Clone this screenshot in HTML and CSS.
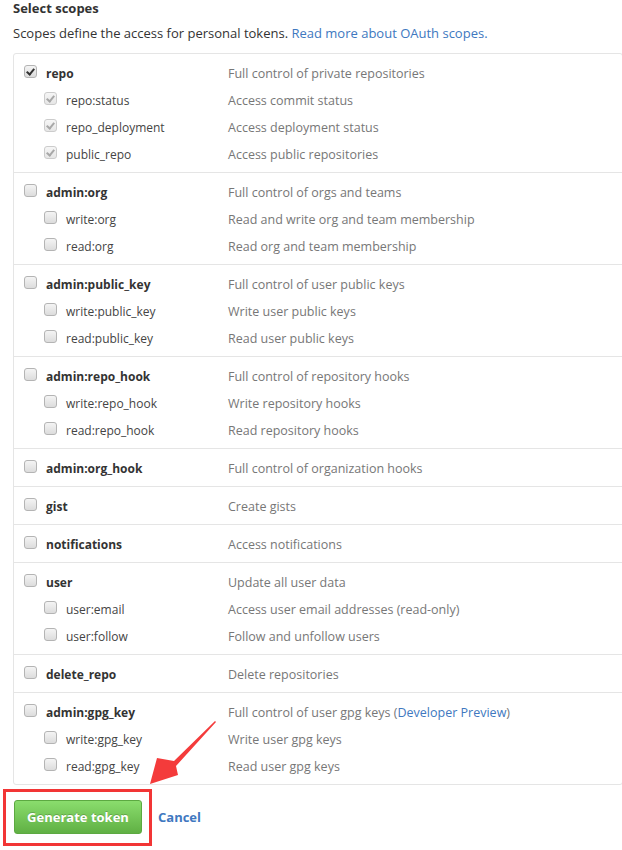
FILE: index.html
```html
<!DOCTYPE html>
<html>
<head>
<meta charset="utf-8">
<link rel="stylesheet" href="styles.css">
</head>
<body>
<div class="page">
  <h3 class="title">Select scopes</h3>
  <p class="note">Scopes define the access for personal tokens. <a href="#">Read more about OAuth scopes.</a></p>
  <div class="box">
    <div class="group">
      <div class="row"><span class="name main"><span class="cb on"></span>repo</span><span class="desc">Full control of private repositories</span></div>
      <div class="row"><span class="name sub"><span class="cb on dis"></span>repo:status</span><span class="desc">Access commit status</span></div>
      <div class="row"><span class="name sub"><span class="cb on dis"></span>repo_deployment</span><span class="desc">Access deployment status</span></div>
      <div class="row"><span class="name sub"><span class="cb on dis"></span>public_repo</span><span class="desc">Access public repositories</span></div>
    </div>
    <div class="group">
      <div class="row"><span class="name main"><span class="cb"></span>admin:org</span><span class="desc">Full control of orgs and teams</span></div>
      <div class="row"><span class="name sub"><span class="cb"></span>write:org</span><span class="desc">Read and write org and team membership</span></div>
      <div class="row"><span class="name sub"><span class="cb"></span>read:org</span><span class="desc">Read org and team membership</span></div>
    </div>
    <div class="group">
      <div class="row"><span class="name main"><span class="cb"></span>admin:public_key</span><span class="desc">Full control of user public keys</span></div>
      <div class="row"><span class="name sub"><span class="cb"></span>write:public_key</span><span class="desc">Write user public keys</span></div>
      <div class="row"><span class="name sub"><span class="cb"></span>read:public_key</span><span class="desc">Read user public keys</span></div>
    </div>
    <div class="group">
      <div class="row"><span class="name main"><span class="cb"></span>admin:repo_hook</span><span class="desc">Full control of repository hooks</span></div>
      <div class="row"><span class="name sub"><span class="cb"></span>write:repo_hook</span><span class="desc">Write repository hooks</span></div>
      <div class="row"><span class="name sub"><span class="cb"></span>read:repo_hook</span><span class="desc">Read repository hooks</span></div>
    </div>
    <div class="group">
      <div class="row"><span class="name main"><span class="cb"></span>admin:org_hook</span><span class="desc">Full control of organization hooks</span></div>
    </div>
    <div class="group">
      <div class="row"><span class="name main"><span class="cb"></span>gist</span><span class="desc">Create gists</span></div>
    </div>
    <div class="group">
      <div class="row"><span class="name main"><span class="cb"></span>notifications</span><span class="desc">Access notifications</span></div>
    </div>
    <div class="group">
      <div class="row"><span class="name main"><span class="cb"></span>user</span><span class="desc">Update all user data</span></div>
      <div class="row"><span class="name sub"><span class="cb"></span>user:email</span><span class="desc">Access user email addresses (read-only)</span></div>
      <div class="row"><span class="name sub"><span class="cb"></span>user:follow</span><span class="desc">Follow and unfollow users</span></div>
    </div>
    <div class="group">
      <div class="row"><span class="name main"><span class="cb"></span>delete_repo</span><span class="desc">Delete repositories</span></div>
    </div>
    <div class="group">
      <div class="row"><span class="name main"><span class="cb"></span>admin:gpg_key</span><span class="desc">Full control of user gpg keys (<a href="#">Developer Preview</a>)</span></div>
      <div class="row"><span class="name sub"><span class="cb"></span>write:gpg_key</span><span class="desc">Write user gpg keys</span></div>
      <div class="row"><span class="name sub"><span class="cb"></span>read:gpg_key</span><span class="desc">Read user gpg keys</span></div>
    </div>
  </div>
  <div class="actions">
    <button class="btn">Generate token</button>
    <a class="cancel" href="#">Cancel</a>
  </div>
  <div class="highlight"></div>
  <svg class="arrow" width="80" height="80" viewBox="0 0 80 80">
    <polygon points="75,11 34,51 17,48 10,74 38,65 36,56 76,12" fill="#f43b3b"/>
  </svg>
</div>
</body>
</html>
```

FILE: styles.css
```css
html, body {
  margin: 0;
  padding: 0;
  background: #fff;
  overflow: hidden;
}
.page {
  position: relative;
  padding-left: 13px;
  font-family: "Open Sans", "Noto Sans", sans-serif;
  font-size: 12.5px;
  color: #333;
  height: 850px;
}
.title {
  margin: 0;
  font-size: 13px;
  font-weight: 700;
  line-height: 16px;
}
.note {
  margin: 7px 0 0 0;
  line-height: 20px;
  font-size: 13px;
  color: #333;
}
a {
  color: #4078c0;
  text-decoration: none;
}
.box {
  margin-top: 10px;
  width: 610px;
  border: 1px solid #e5e5e5;
  border-radius: 3px;
  box-sizing: border-box;
}
.group {
  padding: 5px 0 5px 10px;
  border-top: 1px solid #e5e5e5;
}
.group:first-child {
  border-top: 0;
}
.row {
  display: grid;
  grid-template-columns: 204px 1fr;
  align-items: center;
  height: 27px;
  padding-top: 2px;
  box-sizing: border-box;
}
.name {
  display: flex;
  align-items: center;
  white-space: nowrap;
  font-size: 12px;
}
.name.main {
  font-weight: 700;
}
.name.sub {
  padding-left: 20px;
  color: #444;
}
.desc {
  color: #777;
}
.cb {
  box-sizing: border-box;
  width: 13px;
  height: 13px;
  margin-right: 9px;
  margin-top: -5px;
  border: 1px solid #b4b4b4;
  border-radius: 3px;
  background: linear-gradient(#f4f4f4, #dcdcdc);
  position: relative;
  flex: none;
}
.cb.on::after {
  content: "";
  position: absolute;
  left: 3px;
  top: 1px;
  width: 3px;
  height: 6px;
  border: solid #333;
  border-width: 0 2px 2px 0;
  transform: rotate(40deg);
}
.cb.dis {
  border-color: #ccc;
  background: linear-gradient(#f6f6f6, #e6e6e6);
}
.cb.dis::after {
  border-color: #a8a8a8;
}
.actions {
  display: flex;
  align-items: center;
  gap: 16px;
  margin-top: 15px;
  padding-left: 1px;
}
.btn {
  box-sizing: border-box;
  width: 128px;
  height: 34px;
  border: 1px solid #5ca941;
  border-radius: 3px;
  background: linear-gradient(#8add6d, #60b044);
  color: #fff;
  font-family: "Open Sans", "Noto Sans", sans-serif;
  font-size: 13px;
  font-weight: 700;
  text-shadow: 0 -1px 0 rgba(0,0,0,0.2);
  padding: 0;
}
.cancel {
  font-weight: 700;
  font-size: 13px;
}
.highlight {
  position: absolute;
  left: 3px;
  top: 789px;
  width: 143px;
  height: 51px;
  border: 3px solid #f23535;
}
.arrow {
  position: absolute;
  left: 140px;
  top: 710px;
}
```
